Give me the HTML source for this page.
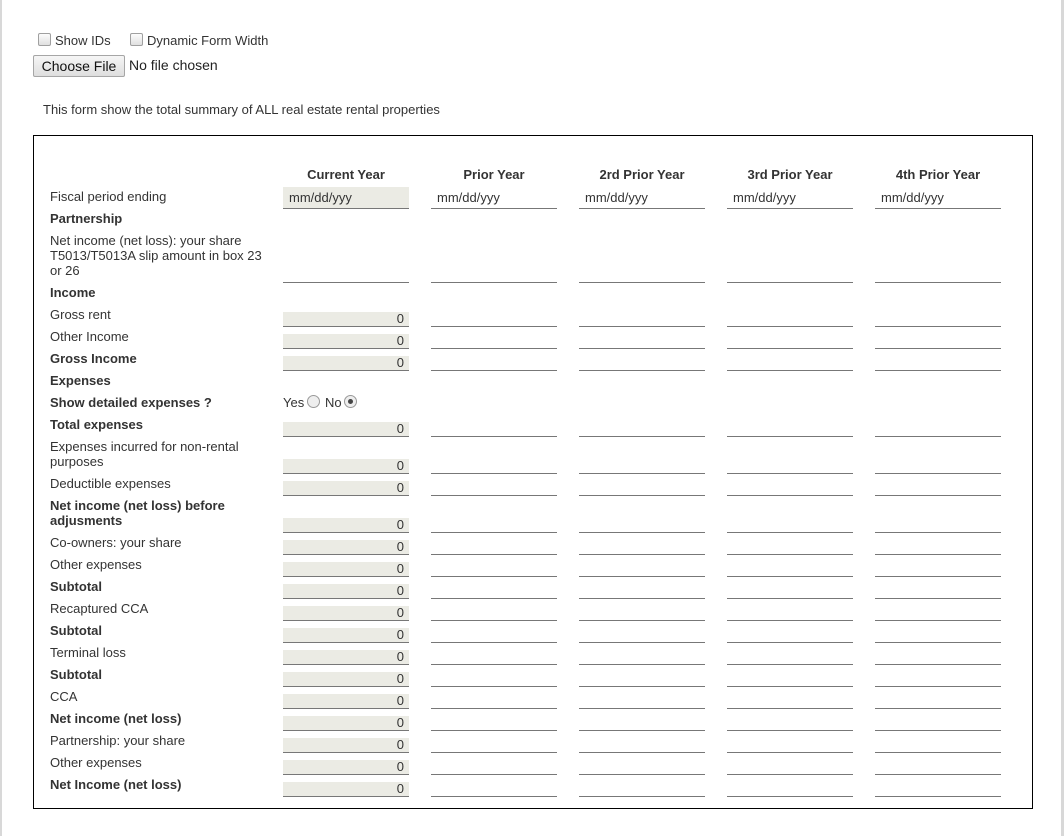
<!DOCTYPE html>
<html><head><meta charset="utf-8"><style>
body{margin:0;width:1064px;height:836px;position:relative;background:#fff;font-family:"Liberation Sans",Arial,sans-serif;color:#333;font-size:13px;overflow:hidden}
.a{position:absolute;white-space:nowrap}
.l{position:absolute;left:50px;line-height:15px}
.b{font-weight:bold}
.i{position:absolute;width:126px;height:14px;border-bottom:1px solid #777;box-sizing:content-box}
.g{background:#ebebe4;text-align:right;line-height:14px;font-size:13px}
.g span{padding-right:5px}
.h{position:absolute;top:167px;width:126px;text-align:center;font-weight:bold;font-size:13px}
.cb{position:absolute;width:11px;height:11px;border:1px solid #a0a0a0;border-radius:2px;background:linear-gradient(#fcfcfc,#e0e0e0)}
</style></head><body>
<div class="a" style="left:0;top:0;width:2px;height:836px;background:#d8d8d8"></div>
<div class="a" style="left:1061px;top:0;width:3px;height:836px;background:#d8d8d8"></div>

<div class="cb" style="left:38px;top:33px"></div><div class="a" style="left:55px;top:33px">Show IDs</div>
<div class="cb" style="left:130px;top:33px"></div><div class="a" style="left:147px;top:33px">Dynamic Form Width</div>
<div class="a" style="left:33px;top:55px;width:90px;height:20px;border:1px solid #a6a6a6;border-radius:2px;background:linear-gradient(#f6f6f6,#dedede);font-size:14px;line-height:20px;text-align:center;color:#111">Choose File</div>
<div class="a" style="left:129px;top:57px;font-size:14px;color:#222">No file chosen</div>
<div class="a" style="left:43px;top:102px;font-size:13px">This form show the total summary of ALL real estate rental properties</div>

<div class="a" style="left:33px;top:135px;width:998px;height:672px;border:1px solid #000"></div>

<div class="h" style="left:283px">Current Year</div>
<div class="h" style="left:431px">Prior Year</div>
<div class="h" style="left:579px">2rd Prior Year</div>
<div class="h" style="left:727px">3rd Prior Year</div>
<div class="h" style="left:875px">4th Prior Year</div>

<div class="l" style="top:189px">Fiscal period ending</div>
<div class="i" style="left:283px;top:187px;height:21px;background:#ebebe4;line-height:21px"><span style="padding-left:6px">mm/dd/yyy</span></div>
<div class="i" style="left:431px;top:187px;height:21px;line-height:21px"><span style="padding-left:6px">mm/dd/yyy</span></div>
<div class="i" style="left:579px;top:187px;height:21px;line-height:21px"><span style="padding-left:6px">mm/dd/yyy</span></div>
<div class="i" style="left:727px;top:187px;height:21px;line-height:21px"><span style="padding-left:6px">mm/dd/yyy</span></div>
<div class="i" style="left:875px;top:187px;height:21px;line-height:21px"><span style="padding-left:6px">mm/dd/yyy</span></div>

<div class="l b" style="top:211px">Partnership</div>
<div class="l" style="top:233px">Net income (net loss): your share<br>T5013/T5013A slip amount in box 23<br>or 26</div>
<div class="i" style="left:283px;top:268px"></div><div class="i" style="left:431px;top:268px"></div><div class="i" style="left:579px;top:268px"></div><div class="i" style="left:727px;top:268px"></div><div class="i" style="left:875px;top:268px"></div>
<div class="l b" style="top:285px">Income</div>
<div class="l b" style="top:373px">Expenses</div>
<div class="l b" style="top:395px">Show detailed expenses ?</div>
<div class="a" style="left:283px;top:395px">Yes</div>
<div class="a" style="left:307px;top:395px;width:11px;height:11px;border:1px solid #999;border-radius:50%;background:#eee"></div>
<div class="a" style="left:325px;top:395px">No</div>
<div class="a" style="left:344px;top:395px;width:11px;height:11px;border:1px solid #999;border-radius:50%;background:#eee"><div style="position:absolute;left:3px;top:3px;width:5px;height:5px;border-radius:50%;background:#444"></div></div>

<div class="l" style="top:307px">Gross rent</div>
<div class="l" style="top:329px">Other Income</div>
<div class="l b" style="top:351px">Gross Income</div>
<div class="l b" style="top:417px">Total expenses</div>
<div class="l" style="top:439px">Expenses incurred for non-rental<br>purposes</div>
<div class="l" style="top:476px">Deductible expenses</div>
<div class="l b" style="top:498px">Net income (net loss) before<br>adjusments</div>
<div class="l" style="top:535px">Co-owners: your share</div>
<div class="l" style="top:557px">Other expenses</div>
<div class="l b" style="top:579px">Subtotal</div>
<div class="l" style="top:601px">Recaptured CCA</div>
<div class="l b" style="top:623px">Subtotal</div>
<div class="l" style="top:645px">Terminal loss</div>
<div class="l b" style="top:667px">Subtotal</div>
<div class="l" style="top:689px">CCA</div>
<div class="l b" style="top:711px">Net income (net loss)</div>
<div class="l" style="top:733px">Partnership: your share</div>
<div class="l" style="top:755px">Other expenses</div>
<div class="l b" style="top:777px">Net Income (net loss)</div>

<div class="i g" style="left:283px;top:312px"><span>0</span></div><div class="i" style="left:431px;top:312px"></div><div class="i" style="left:579px;top:312px"></div><div class="i" style="left:727px;top:312px"></div><div class="i" style="left:875px;top:312px"></div>
<div class="i g" style="left:283px;top:334px"><span>0</span></div><div class="i" style="left:431px;top:334px"></div><div class="i" style="left:579px;top:334px"></div><div class="i" style="left:727px;top:334px"></div><div class="i" style="left:875px;top:334px"></div>
<div class="i g" style="left:283px;top:356px"><span>0</span></div><div class="i" style="left:431px;top:356px"></div><div class="i" style="left:579px;top:356px"></div><div class="i" style="left:727px;top:356px"></div><div class="i" style="left:875px;top:356px"></div>
<div class="i g" style="left:283px;top:422px"><span>0</span></div><div class="i" style="left:431px;top:422px"></div><div class="i" style="left:579px;top:422px"></div><div class="i" style="left:727px;top:422px"></div><div class="i" style="left:875px;top:422px"></div>
<div class="i g" style="left:283px;top:459px"><span>0</span></div><div class="i" style="left:431px;top:459px"></div><div class="i" style="left:579px;top:459px"></div><div class="i" style="left:727px;top:459px"></div><div class="i" style="left:875px;top:459px"></div>
<div class="i g" style="left:283px;top:481px"><span>0</span></div><div class="i" style="left:431px;top:481px"></div><div class="i" style="left:579px;top:481px"></div><div class="i" style="left:727px;top:481px"></div><div class="i" style="left:875px;top:481px"></div>
<div class="i g" style="left:283px;top:518px"><span>0</span></div><div class="i" style="left:431px;top:518px"></div><div class="i" style="left:579px;top:518px"></div><div class="i" style="left:727px;top:518px"></div><div class="i" style="left:875px;top:518px"></div>
<div class="i g" style="left:283px;top:540px"><span>0</span></div><div class="i" style="left:431px;top:540px"></div><div class="i" style="left:579px;top:540px"></div><div class="i" style="left:727px;top:540px"></div><div class="i" style="left:875px;top:540px"></div>
<div class="i g" style="left:283px;top:562px"><span>0</span></div><div class="i" style="left:431px;top:562px"></div><div class="i" style="left:579px;top:562px"></div><div class="i" style="left:727px;top:562px"></div><div class="i" style="left:875px;top:562px"></div>
<div class="i g" style="left:283px;top:584px"><span>0</span></div><div class="i" style="left:431px;top:584px"></div><div class="i" style="left:579px;top:584px"></div><div class="i" style="left:727px;top:584px"></div><div class="i" style="left:875px;top:584px"></div>
<div class="i g" style="left:283px;top:606px"><span>0</span></div><div class="i" style="left:431px;top:606px"></div><div class="i" style="left:579px;top:606px"></div><div class="i" style="left:727px;top:606px"></div><div class="i" style="left:875px;top:606px"></div>
<div class="i g" style="left:283px;top:628px"><span>0</span></div><div class="i" style="left:431px;top:628px"></div><div class="i" style="left:579px;top:628px"></div><div class="i" style="left:727px;top:628px"></div><div class="i" style="left:875px;top:628px"></div>
<div class="i g" style="left:283px;top:650px"><span>0</span></div><div class="i" style="left:431px;top:650px"></div><div class="i" style="left:579px;top:650px"></div><div class="i" style="left:727px;top:650px"></div><div class="i" style="left:875px;top:650px"></div>
<div class="i g" style="left:283px;top:672px"><span>0</span></div><div class="i" style="left:431px;top:672px"></div><div class="i" style="left:579px;top:672px"></div><div class="i" style="left:727px;top:672px"></div><div class="i" style="left:875px;top:672px"></div>
<div class="i g" style="left:283px;top:694px"><span>0</span></div><div class="i" style="left:431px;top:694px"></div><div class="i" style="left:579px;top:694px"></div><div class="i" style="left:727px;top:694px"></div><div class="i" style="left:875px;top:694px"></div>
<div class="i g" style="left:283px;top:716px"><span>0</span></div><div class="i" style="left:431px;top:716px"></div><div class="i" style="left:579px;top:716px"></div><div class="i" style="left:727px;top:716px"></div><div class="i" style="left:875px;top:716px"></div>
<div class="i g" style="left:283px;top:738px"><span>0</span></div><div class="i" style="left:431px;top:738px"></div><div class="i" style="left:579px;top:738px"></div><div class="i" style="left:727px;top:738px"></div><div class="i" style="left:875px;top:738px"></div>
<div class="i g" style="left:283px;top:760px"><span>0</span></div><div class="i" style="left:431px;top:760px"></div><div class="i" style="left:579px;top:760px"></div><div class="i" style="left:727px;top:760px"></div><div class="i" style="left:875px;top:760px"></div>
<div class="i g" style="left:283px;top:782px"><span>0</span></div><div class="i" style="left:431px;top:782px"></div><div class="i" style="left:579px;top:782px"></div><div class="i" style="left:727px;top:782px"></div><div class="i" style="left:875px;top:782px"></div>
</body></html>
